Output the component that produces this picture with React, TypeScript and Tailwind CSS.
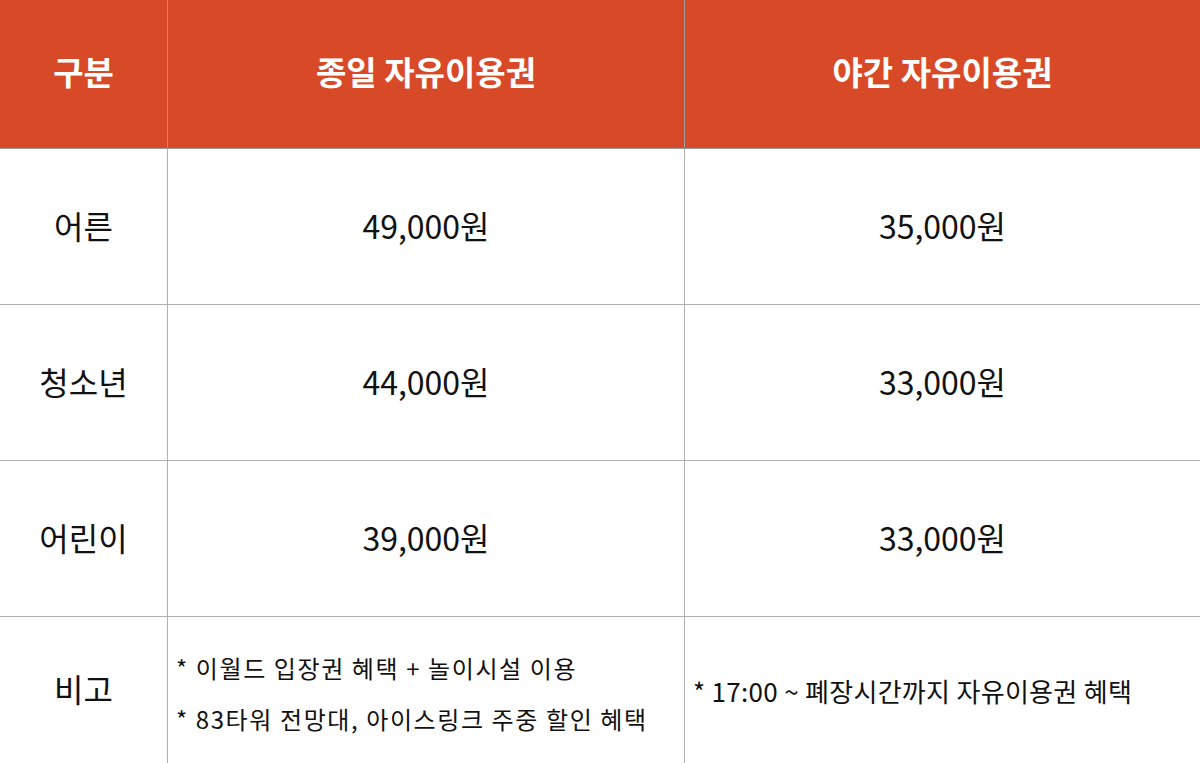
import React from 'react';

const rows = [
  { label: '어른', day: '49,000원', night: '35,000원' },
  { label: '청소년', day: '44,000원', night: '33,000원' },
  { label: '어린이', day: '39,000원', night: '33,000원' },
];

const font = { fontFamily: '"Noto Sans CJK KR", "Noto Sans", sans-serif' };

export default function App() {
  return (
    <div className="w-[1200px] h-[763px] overflow-hidden bg-white" style={font}>
      <div className="grid grid-cols-[168px_517px_515px]">
        {/* 헤더 */}
        <div className="h-[149px] pb-[4px] bg-[#d84a27] border-r border-b border-[#9a9a9a] flex items-center justify-center text-white text-[33px] font-bold">구분</div>
        <div className="h-[149px] pb-[4px] bg-[#d84a27] border-r border-b border-[#9a9a9a] flex items-center justify-center text-white text-[33px] font-bold">종일 자유이용권</div>
        <div className="h-[149px] pb-[4px] bg-[#d84a27] border-b border-[#9a9a9a] flex items-center justify-center text-white text-[33px] font-bold">야간 자유이용권</div>

        {rows.map((r) => (
          <React.Fragment key={r.label}>
            <div className="h-[156px] pb-[4px] border-r border-b border-[#b0b0b0] flex items-center justify-center text-[32px] text-[#111]">{r.label}</div>
            <div className="h-[156px] pb-[4px] border-r border-b border-[#b0b0b0] flex items-center justify-center text-[32px] text-[#111]">{r.day}</div>
            <div className="h-[156px] pb-[4px] border-b border-[#b0b0b0] flex items-center justify-center text-[32px] text-[#111]">{r.night}</div>
          </React.Fragment>
        ))}

        {/* 비고 */}
        <div className="h-[150px] pb-[8px] border-r border-[#b0b0b0] flex items-center justify-center text-[32px] text-[#111]">비고</div>
        <div className="h-[150px] pt-[2px] border-r border-[#b0b0b0] flex flex-col justify-center gap-[14px] pl-[8px] text-[24px] leading-[37px] text-[#111] tracking-[1.6px]">
          <div>* 이월드 입장권 혜택 + 놀이시설 이용</div>
          <div>* 83타워 전망대, 아이스링크 주중 할인 혜택</div>
        </div>
        <div className="h-[150px] pb-[4px] flex items-center pl-[8px] text-[26px] tracking-[0.3px] text-[#111]">* 17:00 ~ 폐장시간까지 자유이용권 혜택</div>
      </div>
    </div>
  );
}
